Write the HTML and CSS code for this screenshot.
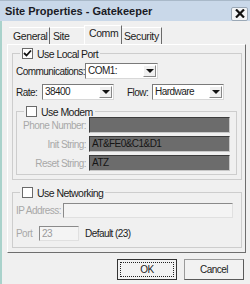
FILE: index.html
```html
<!DOCTYPE html>
<html lang="en">
<head>
    <link rel="stylesheet" href="styles.css">
</head>
<body>
    <div class="window">
        <div class="titlebar">
            <span class="title">Site Properties - Gatekeeper</span>
            <span class="close">
                <svg width="10" height="9" viewBox="0 0 10 9"><path d="M1 0.5 L9 8.5 M9 0.5 L1 8.5" stroke="#111" stroke-width="2.2"/></svg>
            </span>
        </div>

        <div class="client">
            <div class="tabs">
                <div class="tab tab-general">General</div>
                <div class="tab tab-site">Site</div>
                <div class="tab tab-comm selected">Comm</div>
                <div class="tab tab-security">Security</div>
            </div>

            <div class="panel">
                <!-- Local port group -->
                <fieldset class="group local">
                    <legend><span class="check checked"><svg width="9" height="9" viewBox="0 0 9 9"><path d="M1 4 L3.5 6.5 L8 1.5" fill="none" stroke="#111" stroke-width="1.8"/></svg></span>Use Local Port</legend>
                    <div class="row">
                        <span class="lbl lbl-comm">Communications:</span>
                        <div class="combo combo-comm">COM1:<span class="arrow"></span></div>
                    </div>
                    <div class="row row-rate">
                        <span class="lbl lbl-rate">Rate:</span>
                        <div class="combo combo-rate">38400<span class="arrow"></span></div>
                        <span class="lbl lbl-flow">Flow:</span>
                        <div class="combo combo-flow">Hardware<span class="arrow"></span></div>
                    </div>

                    <fieldset class="group modem">
                        <legend><span class="check"></span>Use Modem</legend>
                        <div class="row">
                            <span class="lbl lbl-modem">Phone Number:</span>
                            <div class="field dark"></div>
                        </div>
                        <div class="row row-modem">
                            <span class="lbl lbl-modem">Init String:</span>
                            <div class="field dark">AT&amp;FE0&amp;C1&amp;D1</div>
                        </div>
                        <div class="row row-modem">
                            <span class="lbl lbl-modem">Reset String:</span>
                            <div class="field dark">ATZ</div>
                        </div>
                    </fieldset>
                </fieldset>

                <!-- Networking group -->
                <fieldset class="group network">
                    <legend><span class="check"></span>Use Networking</legend>
                    <div class="row">
                        <span class="lbl lbl-ip">IP Address:</span>
                        <div class="field light field-ip"></div>
                    </div>
                    <div class="row row-port">
                        <span class="lbl lbl-port">Port</span>
                        <div class="field light field-port">23</div>
                        <span class="default-text">Default (23)</span>
                    </div>
                </fieldset>
            </div>

            <div class="buttons">
                <div class="button default"><span class="focus">OK</span></div>
                <div class="button">Cancel</div>
            </div>
        </div>
    </div>
</body>
</html>
```

FILE: styles.css
```css
* {
    margin: 0;
    padding: 0;
    box-sizing: border-box;
}
body {
    width: 250px;
    height: 284px;
    overflow: hidden;
    background-color: #f0f0f0;
    font-family: "Liberation Sans", Arial, sans-serif;
    font-size: 10px;
    letter-spacing: -0.55px;
    color: #1c1c1c;
    white-space: nowrap;
}
.window {
    width: 250px;
    height: 284px;
    background-color: #f0f0f0;
}
.titlebar {
    height: 21px;
    display: flex;
    align-items: center;
    justify-content: space-between;
    padding: 0 2px 0 5px;
    background-color: #c9d8e9;
    border-top: 1px solid #a9b9c9;
}
.title {
    font-weight: bold;
    font-size: 11px;
    letter-spacing: 0;
    color: #1a1a24;
}
.close {
    width: 17px;
    height: 14px;
    margin-top: 5px;
    display: flex;
    align-items: center;
    justify-content: center;
    background-color: #f2f4f6;
    border: 1px solid #9aa8b6;
    border-radius: 2px;
}
.client {
    border-left: 2px solid #a9d2cb;
    height: 263px;
    padding-left: 5px;
}

/* tabs */
.tabs {
    height: 23px;
    display: flex;
    align-items: flex-end;
    padding-left: 2px;
    font-size: 10.5px;
    letter-spacing: -0.4px;
}
.tab {
    height: 17px;
    line-height: 16px;
    padding-left: 4px;
    border-top: 1px solid #fff;
    border-right: 1px solid #6a6a6a;
}
.tab-general { width: 41px; }
.tab-site { width: 34px; padding-left: 3px; border-right: none; }
.tab-comm { width: 38px; }
.tab-security { width: 40px; padding-left: 2px; }
.tab.selected {
    height: 19px;
    line-height: 15px;
    padding-left: 4px;
    border-left: 1px solid #fff;
    background-color: #f0f0f0;
}

/* tab page */
.panel {
    width: 239px;
    height: 209px;
    padding: 3px 0 0 4px;
    border-top: 1px solid #fff;
    border-left: 1px solid #fff;
    border-right: 1px solid #6e6e6e;
    border-bottom: 1px solid #6e6e6e;
}
.group {
    border: 1px solid #cdcdcd;
    min-width: 0;
}
.group legend {
    display: flex;
    align-items: center;
    height: 11px;
    padding: 0 2px;
    margin-left: 4px;
    font-size: 10.5px;
}
.check {
    width: 11px;
    height: 11px;
    margin-right: 4px;
    display: flex;
    align-items: center;
    justify-content: center;
    background-color: #fff;
    border: 1px solid #6a6a6a;
}
.local {
    width: 230px;
    padding: 4px 4px 4px 3px;
}
.modem {
    width: 221px;
    margin-top: 6px;
    padding: 0 6px 3px 3px;
}
.network {
    width: 230px;
    margin-top: 7px;
    padding: 5px 8px 6px 3px;
}
.row {
    display: flex;
    align-items: center;
}
.row-rate { margin-top: 5px; }
.row-modem { margin-top: 3px; }
.row-port { margin-top: 8px; }

.lbl-comm { width: 69px; }
.lbl-rate { width: 26px; }
.lbl-flow { width: 25px; margin-left: 13px; }
.lbl-modem {
    width: 66px;
    margin-right: 3px;
    text-align: right;
    color: #a8a8a8;
}
.lbl-ip { width: 47px; color: #a8a8a8; }
.lbl-port { width: 23px; color: #a8a8a8; }

/* combo boxes */
.combo {
    position: relative;
    height: 16px;
    line-height: 14px;
    padding-left: 2px;
    background-color: #fff;
    border: 1px solid #7a7a7a;
    border-right-color: #d8d8d8;
    border-bottom-color: #d8d8d8;
}
.combo-comm { width: 73px; }
.combo-rate { width: 72px; }
.combo-flow { width: 72px; }
.arrow {
    position: absolute;
    right: 1px;
    top: 1px;
    width: 13px;
    height: 12px;
    background-color: #f0f0f0;
    border: 1px solid #fff;
    border-right-color: #888;
    border-bottom-color: #888;
}
.arrow::after {
    content: "";
    position: absolute;
    left: 2px;
    top: 3px;
    border-left: 4px solid transparent;
    border-right: 4px solid transparent;
    border-top: 4px solid #111;
}

/* text fields */
.field {
    height: 16px;
    line-height: 14px;
    padding-left: 2px;
    border: 1px solid #3c3c3c;
    border-right-color: #c8c8c8;
    border-bottom-color: #c8c8c8;
}
.field.dark {
    width: 141px;
    background-color: #6c6c6c;
    color: #151515;
}
.field.light {
    height: 15px;
    background-color: #f4f4f4;
    color: #9a9a9a;
    border-color: #8a8a8a #e0e0e0 #e0e0e0 #8a8a8a;
}
.field-ip { width: 170px; }
.field-port { width: 40px; }
.default-text { margin-left: 6px; }

/* buttons */
.buttons {
    display: flex;
    justify-content: flex-end;
    gap: 7px;
    padding-right: 6px;
    margin-top: 6px;
}
.button {
    width: 60px;
    height: 21px;
    display: flex;
    align-items: center;
    justify-content: center;
    background-color: #f2f2f2;
    border: 1px solid #9a9a9a;
    border-right-color: #5a5a5a;
    border-bottom-color: #5a5a5a;
}
.button.default {
    border: 1px solid #333;
    padding: 2px;
}
.focus {
    width: 100%;
    height: 100%;
    display: flex;
    align-items: center;
    justify-content: center;
    border: 1px dotted #222;
}
```
